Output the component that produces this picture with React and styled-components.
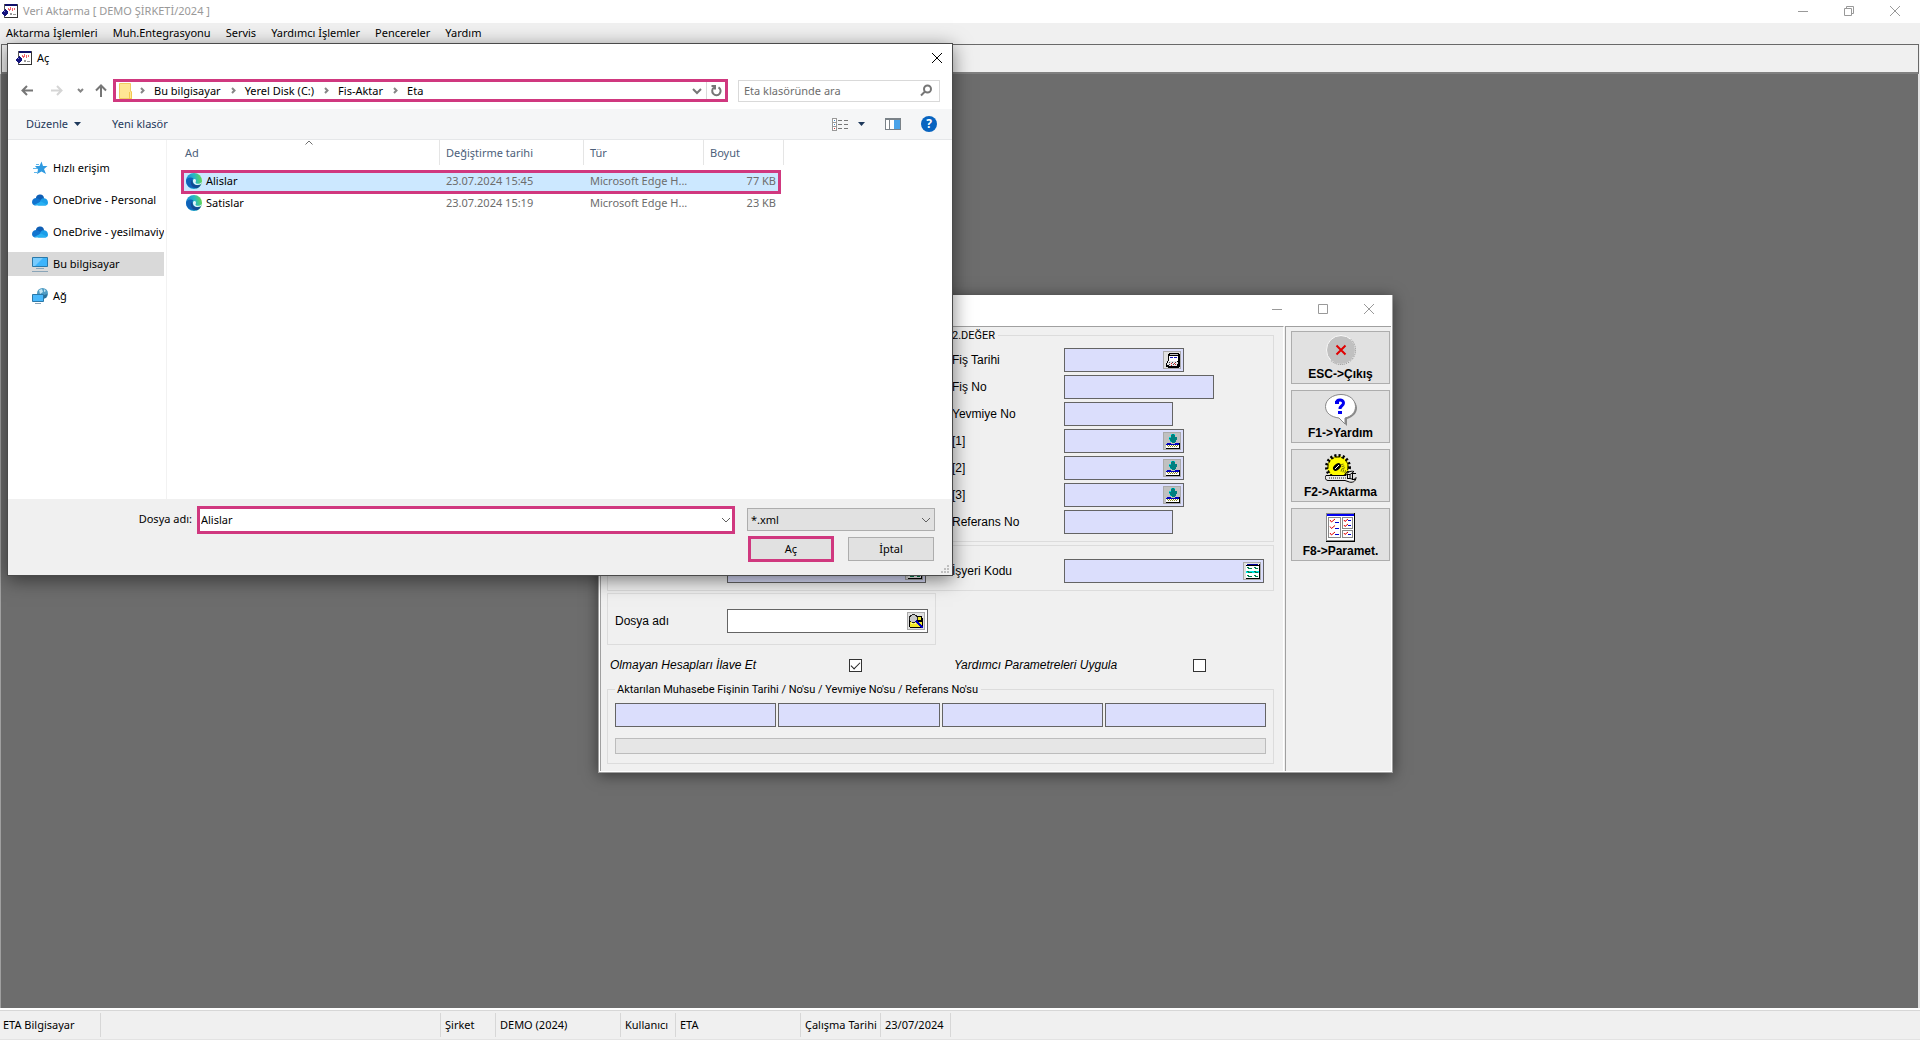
import { useState } from 'react';
import styled, { createGlobalStyle } from 'styled-components';

const menus = ['Aktarma İşlemleri', 'Muh.Entegrasyonu', 'Servis', 'Yardımcı İşlemler', 'Pencereler', 'Yardım'];

const folders = ['Bu bilgisayar', 'Yerel Disk (C:)', 'Fis-Aktar', 'Eta'];

const places = [
    { name: 'Hızlı erişim', icon: StarIcon },
    { name: 'OneDrive - Personal', icon: CloudIcon },
    { name: 'OneDrive - yesilmaviy', icon: CloudIcon },
    { name: 'Bu bilgisayar', icon: ComputerIcon, selected: true },
    { name: 'Ağ', icon: NetworkIcon },
];

const files = [
    { name: 'Alislar', date: '23.07.2024 15:45', type: 'Microsoft Edge H...', size: '77 KB' },
    { name: 'Satislar', date: '23.07.2024 15:19', type: 'Microsoft Edge H...', size: '23 KB' },
];

const fields = [
    { id: 'tarih', label: 'Fiş Tarihi', width: 120, icon: CalendarIcon },
    { id: 'fisno', label: 'Fiş No', width: 150 },
    { id: 'yevmiye', label: 'Yevmiye No', width: 109 },
    { id: 'kod1', label: '[1]', width: 120, icon: PickIcon },
    { id: 'kod2', label: '[2]', width: 120, icon: PickIcon },
    { id: 'kod3', label: '[3]', width: 120, icon: PickIcon },
    { id: 'referans', label: 'Referans No', width: 109 },
];

const actions = [
    { label: 'ESC->Çıkış', icon: ExitIcon },
    { label: 'F1->Yardım', icon: HelpIcon },
    { label: 'F2->Aktarma', icon: TransferIcon },
    { label: 'F8->Paramet.', icon: ParamsIcon },
];

const status = [
    { text: 'ETA Bilgisayar', width: 98 },
    { text: '', width: 340 },
    { text: 'Şirket', width: 55 },
    { text: 'DEMO (2024)', width: 125 },
    { text: 'Kullanıcı', width: 55 },
    { text: 'ETA', width: 125 },
    { text: 'Çalışma Tarihi', width: 80 },
    { text: '23/07/2024', width: 70 },
];

function App() {
    return (
        <Page>
            <GlobalStyle />
            <TitleBar>
                <AppIcon />
                <h1>Veri Aktarma [ DEMO ŞİRKETİ/2024 ]</h1>
                <WindowButtons />
            </TitleBar>
            <MenuBar>
                {menus.map((menu) => <MenuItem key={menu}>{menu}</MenuItem>)}
            </MenuBar>
            <ToolStrip />
            <Workspace />
            <StatusBar>
                {status.map((cell, i) => <StatusCell key={i} $width={cell.width}>{cell.text}</StatusCell>)}
            </StatusBar>
            <TransferWindow />
            <OpenDialog />
        </Page>
    );
}

function WindowButtons({ restored }) {
    return (
        <Controls>
            <button aria-label="Simge durumuna küçült"><Glyph><path d="M0 5.5h10" /></Glyph></button>
            <button aria-label="Ekranı kapla">
                {restored
                    ? <Glyph><path d="M.5 .5h9v9h-9z" /></Glyph>
                    : <Glyph><path d="M.5 2.5h7v7h-7zM2.5 2.5v-2h7v7h-2" /></Glyph>}
            </button>
            <button aria-label="Kapat"><Glyph><path d="M0 0l10 10M10 0L0 10" /></Glyph></button>
        </Controls>
    );
}

function TransferWindow() {
    const [create, setCreate] = useState(true);
    const [params, setParams] = useState(false);

    return (
        <Transfer>
            <TransferTitle>
                <WindowButtons restored />
            </TransferTitle>
            <TransferBody>
                <Form>
                    <ValueGroup>
                        <GroupTitle $left={342}>2.DEĞER</GroupTitle>
                        {fields.map((field) => (
                            <FieldRow key={field.id}>
                                <label htmlFor={field.id}>{field.label}</label>
                                <Box $width={field.width}>
                                    <input id={field.id} />
                                    {field.icon && <PickButton aria-label={field.label}><field.icon /></PickButton>}
                                </Box>
                            </FieldRow>
                        ))}
                    </ValueGroup>

                    <CodeGroup>
                        <Box $width={199}>
                            <input aria-label="Kod" />
                            <PickButton aria-label="Kod listesi"><ListIcon /></PickButton>
                        </Box>
                        <FieldRow>
                            <label htmlFor="isyeri">İşyeri Kodu</label>
                            <Box $width={200}>
                                <input id="isyeri" />
                                <PickButton aria-label="İşyeri listesi"><ListIcon /></PickButton>
                            </Box>
                        </FieldRow>
                    </CodeGroup>

                    <FileGroup>
                        <label htmlFor="dosya">Dosya adı</label>
                        <Box $width={201} $white>
                            <input id="dosya" />
                            <PickButton aria-label="Dosya seç"><FolderSearchIcon /></PickButton>
                        </Box>
                    </FileGroup>

                    <Checks>
                        <label htmlFor="ilave">Olmayan Hesapları İlave Et</label>
                        <Check id="ilave" type="checkbox" checked={create} onChange={() => setCreate(!create)} />
                        <label htmlFor="uygula">Yardımcı Parametreleri Uygula</label>
                        <Check id="uygula" type="checkbox" checked={params} onChange={() => setParams(!params)} />
                    </Checks>

                    <ResultGroup>
                        <GroupTitle $left={7}>Aktarılan Muhasebe Fişinin Tarihi / No'su / Yevmiye No'su / Referans No'su</GroupTitle>
                        <Results>
                            {['Tarih', 'No', 'Yevmiye No', 'Referans No'].map((name) => (
                                <Box key={name}><input aria-label={name} readOnly /></Box>
                            ))}
                        </Results>
                        <Progress role="progressbar" aria-label="Aktarma" aria-valuenow={0} />
                    </ResultGroup>
                </Form>
                <Actions>
                    {actions.map((action) => (
                        <ActionButton key={action.label}>
                            <action.icon />
                            {action.label}
                        </ActionButton>
                    ))}
                </Actions>
            </TransferBody>
        </Transfer>
    );
}

function OpenDialog() {
    const [fileName, setFileName] = useState('Alislar');

    return (
        <Dialog>
            <DialogTitle>
                <AppIcon />
                <h2>Aç</h2>
                <button aria-label="Kapat"><Glyph><path d="M0 0l10 10M10 0L0 10" /></Glyph></button>
            </DialogTitle>

            <NavRow>
                <NavButtons>
                    <button aria-label="Geri"><Arrow><path d="M12 6.5H1.5M6 2L1.5 6.5 6 11" /></Arrow></button>
                    <button aria-label="İleri"><Arrow $pale><path d="M0 6.5h10.5M6 2l4.5 4.5L6 11" /></Arrow></button>
                    <button aria-label="Son konumlar"><SmallArrow viewBox="0 0 7 7"><path d="M1 2l2.5 2.5L6 2" /></SmallArrow></button>
                    <button aria-label="Yukarı"><Arrow><path d="M6 13V1.5M1 6.5l5-5 5 5" /></Arrow></button>
                </NavButtons>
                <Address>
                    <FolderIcon />
                    {folders.map((folder) => (
                        <Crumb key={folder}>
                            <SmallArrow viewBox="0 0 7 7"><path d="M2 1l2.5 2.5L2 6" /></SmallArrow>
                            <button>{folder}</button>
                        </Crumb>
                    ))}
                    <AddressEnd>
                        <button aria-label="Önceki konumlar"><Chevron $bold viewBox="0 0 10 10"><path d="M1 3l4 4 4-4" /></Chevron></button>
                        <button aria-label="Yenile">
                            <Arrow><path d="M4 3.5A4.2 4.2 0 1 0 8.5 3.3M1.5 2H5v3.5" /></Arrow>
                        </button>
                    </AddressEnd>
                </Address>
                <Search>
                    <input aria-label="Eta klasöründe ara" placeholder="Eta klasöründe ara" />
                    <Arrow><circle cx="7.5" cy="5" r="3.5" /><path d="M5 7.5l-4 4" /></Arrow>
                </Search>
            </NavRow>

            <CommandBar>
                <button>Düzenle <Triangle viewBox="0 0 7 4"><path d="M0 0h7L3.5 4z" /></Triangle></button>
                <button>Yeni klasör</button>
                <ViewTools>
                    <button aria-label="Görünüm"><ViewIcon /><Triangle viewBox="0 0 7 4"><path d="M0 0h7L3.5 4z" /></Triangle></button>
                    <button aria-label="Önizleme bölmesi"><PaneIcon /></button>
                    <HelpButton aria-label="Yardım al">?</HelpButton>
                </ViewTools>
            </CommandBar>

            <Browser>
                <Places>
                    {places.map((place) => (
                        <Place key={place.name} $selected={place.selected}>
                            <place.icon />
                            <span>{place.name}</span>
                        </Place>
                    ))}
                </Places>
                <FileArea>
                    <FileTable>
                        <thead>
                            <tr>
                                <th>
                                    Ad
                                    <SortMark viewBox="0 0 8 5"><path d="M.5 4.5L4 1l3.5 3.5" /></SortMark>
                                </th>
                                <th>Değiştirme tarihi</th>
                                <th>Tür</th>
                                <th>Boyut</th>
                            </tr>
                        </thead>
                        <tbody>
                            {files.map((file) => (
                                <FileRow key={file.name} $selected={file.name === fileName} onClick={() => setFileName(file.name)}>
                                    <td><EdgeIcon />{file.name}</td>
                                    <td>{file.date}</td>
                                    <td>{file.type}</td>
                                    <td>{file.size}</td>
                                </FileRow>
                            ))}
                        </tbody>
                    </FileTable>
                </FileArea>
            </Browser>

            <DialogFooter>
                <label htmlFor="filename">Dosya adı:</label>
                <FileName>
                    <input id="filename" value={fileName} onChange={(event) => setFileName(event.target.value)} />
                    <button aria-label="Son dosyalar"><Chevron viewBox="0 0 10 10"><path d="M1 3l4 4 4-4" /></Chevron></button>
                </FileName>
                <Choices>
                    <TypeSelect>
                        <select aria-label="Dosya türü">
                            <option>*.xml</option>
                        </select>
                        <Chevron viewBox="0 0 10 10"><path d="M1 3l4 4 4-4" /></Chevron>
                    </TypeSelect>
                    <Buttons>
                        <DialogButton $marked>Aç</DialogButton>
                        <DialogButton>İptal</DialogButton>
                    </Buttons>
                </Choices>
                <Grip viewBox="0 0 9 9">
                    <path d="M6 0h2v2h-2zM3 3h2v2h-2zM6 3h2v2h-2zM0 6h2v2h-2zM3 6h2v2h-2zM6 6h2v2h-2z" />
                </Grip>
            </DialogFooter>
        </Dialog>
    );
}

/* icons */

function AppIcon() {
    return (
        <svg width="16" height="14" viewBox="0 0 16 14" shapeRendering="crispEdges">
            <path fill="#fff" stroke="#555" d="M2.5 .5h13v13h-13z" />
            <path fill="#10106a" d="M3 0h12v2H3z" />
            <path fill="#333" d="M15 1h1v13H3v-1h12z" />
            <path fill="#f0606a" d="M6 4h1v1h1v2H7V6H6zM8 3h1v3H8zM10 4h1v3h-1zM12 4h1v2h-1z" />
            <path fill="#999" d="M8 9h2v2H8zM11 10h3v1h-3z" />
            <path fill="#14147c" d="M3 5h1v1h1v1h1v3H5v1H4v1H2v-1H1v-1H0V8h1V7h1V6h1z" />
            <path fill="#7a7ae0" d="M2 7h1v1H2z" />
        </svg>
    );
}

function FolderIcon() {
    return (
        <svg width="13" height="16" viewBox="0 0 13 16">
            <path fill="#ffe694" stroke="#f0cc62" d="M.5 .5h11v8h1v7H.5z" />
            <path fill="#f3c94e" d="M10 9h3v7h-3z" />
            <path fill="#ffe694" d="M11 9h1v6h-1z" />
        </svg>
    );
}

function StarIcon() {
    return (
        <svg width="16" height="16" viewBox="0 0 16 16">
            <path fill="#2f9ae0" d="M9.5 1.5l1.5 4.5h4.5l-3.5 3 2 5-4.500-2.500L5 14l1-4.500L3 6h4.500z" />
            <path stroke="#5fb6ec" d="M4 4.5h3M1 8.5h4M2 12.5h3" />
        </svg>
    );
}

function CloudIcon() {
    return (
        <svg width="16" height="16" viewBox="0 0 16 16">
            <path fill="#0f5fb5" d="M4 7a4 4 0 0 1 8-1l1 3-9 3z" />
            <path fill="#1174cf" d="M0 10a4 4 0 0 1 6-3.5L12 10l-9 3.5A3.5 3.5 0 0 1 0 10z" />
            <path fill="#1b9de8" d="M9 7.5c2-2.5 7-1 7 3a3 3 0 0 1-3 3H6z" />
            <path fill="#28b0f2" d="M2 13l7-3.5 6 3c-1 1-1.5 1-2 1H4z" />
        </svg>
    );
}

function ComputerIcon() {
    return (
        <svg width="16" height="16" viewBox="0 0 16 16">
            <path fill="#3db4fb" stroke="#2b78a8" d="M.5 1.5h15v9H.5z" />
            <path fill="#78cbfd" d="M1 2h10L3 10H1z" />
            <path fill="#8aa5b8" d="M4 12h8v1H4zM0 15h16v1H0z" />
        </svg>
    );
}

function NetworkIcon() {
    return (
        <svg width="16" height="16" viewBox="0 0 16 16">
            <circle cx="10.5" cy="5.5" r="5.5" fill="#4f9cc4" />
            <path fill="#c3e4f2" d="M7 2l3-1 1 3-3 2zM12 1l2 2-2 1z" />
            <path fill="#2d6f98" d="M12 7l3.5-1-1.5 4h-2z" />
            <path fill="#4ab9fc" stroke="#2b78a8" d="M.5 6.5h11v7H.5z" />
            <path fill="#8aa5b8" d="M3 15h6v1H3z" />
        </svg>
    );
}

function EdgeIcon() {
    return (
        <svg width="16" height="16" viewBox="0 0 16 16">
            <defs>
                <linearGradient id="edge" x1="0" y1=".5" x2="1" y2=".3">
                    <stop offset="0" stopColor="#1588d8" />
                    <stop offset=".55" stopColor="#27b8c4" />
                    <stop offset="1" stopColor="#66d94c" />
                </linearGradient>
            </defs>
            <circle cx="8" cy="8" r="8" fill="url(#edge)" />
            <path fill="#0f62b8" d="M0 8c0-3 5-4.5 7.5-2.5C5 7 5.5 12 10 12.5c2 .2 4-.5 5-1.5A8 8 0 0 1 0 8z" />
            <path fill="#124a94" d="M5 8c-1 4 2 7 6 7.3 2-.8 3.3-2.3 4-4.3-4 2.5-9 1-8.5-4.5z" />
            <path fill="#dff2fb" d="M7 7c1-1.5 3-1 3 .7 0 1-.8 1.6-.3 2.3 1 1.3 4.5 1.2 6-1-.2 1-.6 2-1 2.300C11 13 6.500 11.500 7 7z" />
        </svg>
    );
}

function ViewIcon() {
    return (
        <svg width="17" height="13" viewBox="0 0 17 13" shapeRendering="crispEdges">
            <path fill="#fff" stroke="#999" d="M.5 .5h4v12h-4zM.5 4.5h4M.5 8.5h4" />
            <path stroke="#777" d="M6 2.5h4M12 2.5h4M6 6.5h4M12 6.5h4M6 10.5h4M12 10.5h4" />
            <path fill="#4a90d0" d="M2 2h1v1H2zM2 6h1v1H2z" />
            <path fill="#d03030" d="M2 10h1v1H2z" />
        </svg>
    );
}

function PaneIcon() {
    return (
        <svg width="16" height="12" viewBox="0 0 16 12" shapeRendering="crispEdges">
            <path fill="#fff" stroke="#7a8288" d="M.5 .5h15v11H.5z" />
            <path fill="#7a8288" d="M0 0h16v2H0zM4 2h1v9H4z" />
            <path fill="#4ba3e8" d="M9 2h6v9H9z" />
        </svg>
    );
}

function CalendarIcon() {
    return (
        <svg width="16" height="16" viewBox="0 0 16 16" shapeRendering="crispEdges">
            <path fill="#000" d="M5 1h10v1h1v13h-1v1H4v-1H2v-4h1V9h1V2h1z" />
            <path fill="#fff" d="M5 4h9v5H5z" />
            <path fill="#c0c0c0" d="M6 2h8v1H6z" />
            <path fill="#1010c0" d="M6 5h3v1H6zM10 5h3v1h-3z" />
            <path fill="#e8e8e8" d="M4 9h9v1h1v2h-1v2H5v-1H3v-2h1z" />
            <path fill="#444" d="M5 10h1v1H5zM8 10h1v1H8zM11 10h1v1h-1zM5 12h1v1H5zM9 12h1v1H9z" />
            <path fill="#d02020" d="M7 11h1v1H7zM10 11h1v1h-1zM7 13h1v1H7zM11 12h1v1h-1z" />
        </svg>
    );
}

function PickIcon() {
    return (
        <svg width="16" height="16" viewBox="0 0 16 16" shapeRendering="crispEdges">
            <path fill="#c0c0c0" d="M0 0h16v16H0z" />
            <path fill="#008080" d="M7 1h4v3h2v3h-1v2h-1v1H8V9H6V7H5V4h2z" />
            <path fill="#00e0e0" d="M7 1h1v1H7zM5 4h2v1H5zM10 1h1v1h-1zM5 6h1v1H5zM6 8h1v1H6z" />
            <path fill="#0000c0" d="M3 10h4v1H3zM11 10h4v1h-4zM2 11h13v1H2z" />
            <path fill="#fff" d="M2 12h13v3H2z" />
            <path fill="#8a8a20" d="M3 12h1v1H3zM5 12h1v1H5zM7 12h1v1H7zM9 12h1v1H9zM11 12h1v1h-1zM13 12h1v1h-1zM4 13h1v1H4zM6 13h1v1H6zM8 13h1v1H8zM10 13h1v1h-1zM12 13h1v1h-1z" />
            <path fill="#000" d="M15 10h1v6H2v-1h13z" />
        </svg>
    );
}

function ListIcon() {
    return (
        <svg width="16" height="16" viewBox="0 0 16 16" shapeRendering="crispEdges">
            <path fill="#fff" d="M2 1h13v14H2z" />
            <path fill="#0000a0" d="M3 1h11v1H3z" />
            <path fill="#000" d="M2 2h13v1H2zM15 1h1v15H2v-1h13z" />
            <path fill="#00e8e8" d="M2 8h13v2H2z" />
            <path fill="#008050" d="M3 4h2v1h3v1H4V5H3zM10 4h2v1h2v1h-3V5h-1zM3 8h2v1h3v1H4V9H3zM10 8h2v1h2v1h-3V9h-1zM3 12h2v1h3v1H4v-1H3zM10 12h2v1h2v1h-3v-1h-1z" />
        </svg>
    );
}

function FolderSearchIcon() {
    return (
        <svg width="16" height="16" viewBox="0 0 16 16" shapeRendering="crispEdges">
            <path fill="#000" d="M1 4h4V3h9v2h1v9h-1v1H2v-1H1z" />
            <path fill="#f0e828" d="M2 9h12v5H2zM9 4h4v3H9z" />
            <path fill="#fff8a0" d="M3 10h2v1H3zM6 10h2v1H6z" />
            <circle cx="5.5" cy="5.5" r="4" fill="#c8c8c8" stroke="#222" />
            <path fill="none" stroke="#0000c0" strokeWidth="2" d="M8 8l7 7" />
        </svg>
    );
}

function ExitIcon() {
    return (
        <svg width="32" height="30" viewBox="0 0 32 30">
            <circle cx="16" cy="15" r="14.5" fill="#c0c0c0" stroke="#f8f8f8" />
            <path fill="none" stroke="#777" strokeDasharray="1 1" d="M26 4.5A14.5 14.5 0 0 1 6 25.5" />
            <path stroke="#e00000" strokeWidth="2" d="M11.5 10.5l9 9M20.5 10.5l-9 9" />
        </svg>
    );
}

function HelpIcon() {
    return (
        <svg width="32" height="32" viewBox="0 0 32 32">
            <path fill="#888" d="M17 3c9 0 15 5 15 11 0 5-4 9-10 11v7l-6-6z" />
            <path fill="#fff" stroke="#888" d="M16 .5c8 0 14.500 5 14.500 12 0 6-4 10-10.500 11.500V30l-6-6C6 23 .5 19 .5 12.500.5 5.500 8 .5 16 .5z" />
            <path fill="none" stroke="#0000f0" strokeWidth="3" d="M11.500 9.500c0-4.500 7-4.500 7-.5 0 3-3.500 2.500-3.500 6" />
            <path fill="#0000f0" d="M10 7h4v3h-4zM13 17h4v3h-4z" />
        </svg>
    );
}

function TransferIcon() {
    return (
        <svg width="32" height="30" viewBox="0 0 32 30">
            <circle cx="13" cy="14" r="11" fill="#fffb00" stroke="#000" strokeWidth="4" strokeDasharray="2 2" />
            <circle cx="13" cy="14" r="10" fill="#fffb00" stroke="#000" strokeDasharray="3 2" />
            <ellipse cx="12" cy="14" rx="4.5" ry="3" fill="#000" transform="rotate(-40 12 14)" />
            <path stroke="#fff" d="M10 16l4-4" />
            <path stroke="#77770a" strokeDasharray="1 1" strokeWidth="3" d="M16 17l5 2M17 11l2 5" />
            <path fill="#e8e8e8" stroke="#000" d="M1 22.5h20c1-3 4-5 8-4l-4 3v4l4 1 2-2c0 4-4 6-8 4l-3-1H3c-3 0-3-4-2-5z" />
            <path stroke="#888" strokeDasharray="1 1" strokeWidth="2" d="M4 25h18" />
            <path fill="#000" d="M22 21h3v1h-2v3h2v1h-3zM27 20h4v1h-3v5h3v1h-4z" />
        </svg>
    );
}

function ParamsIcon() {
    return (
        <svg width="32" height="30" viewBox="0 0 32 30" shapeRendering="crispEdges">
            <path fill="#fff" stroke="#888" d="M1.5 1.5h28v27h-28z" />
            <path fill="#0000f0" d="M2 2h27v2H2z" />
            <path fill="#000" d="M29 1h1v29H1v-1h28z" />
            <path fill="none" stroke="#888" d="M3.5 5.5h12v20h-12zM17.5 5.5h10v11h-10zM17.5 18.5h10v7h-10z" />
            <path stroke="#0000d0" d="M10 10.500h4M10 16.500h4M10 22.500h4M23 8.500h3M23 13.500h3M23 22.500h3" />
            <path fill="none" stroke="#e00000" shapeRendering="auto" d="M5 8l1.500 2L10 7M5 14.500l1.500 2 3.500-3M5 21l1.500 2 3.500-3M19 8l1 1.500L23 7M19 13l1 1.500 3-2.500M19 21l1 1.500 3-2.500" />
        </svg>
    );
}

export default App;

const GlobalStyle = createGlobalStyle`
    * {
        box-sizing: border-box;
    }

    body {
        margin: 0;
        background-color: #f0f0f0;
    }

    button, input, select {
        margin: 0;
        padding: 0;
        border: none;
        background: none;
        color: inherit;
        font: inherit;
        outline: none;
    }

    h1, h2 {
        margin: 0;
        font: inherit;
    }

    svg {
        flex: none;
        display: block;
    }
`;

const Page = styled.main`
    position: relative;
    display: flex;
    flex-direction: column;
    min-height: 100vh;
    overflow: hidden;
    background-color: #f0f0f0;
    color: #000;
    font-family: 'Noto Sans', 'Open Sans', sans-serif;
    font-size: 11px;
    line-height: 16px;
    white-space: nowrap;
`;

const TitleBar = styled.header`
    display: flex;
    align-items: center;
    gap: 5px;
    height: 23px;
    padding: 0 2px 2px;
    background-color: #fff;
    color: #999;
`;

const Controls = styled.div`
    display: flex;
    margin-left: auto;
    color: #999;

    button {
        display: flex;
        align-items: center;
        justify-content: center;
        width: 46px;
        height: 20px;
    }
`;

const Glyph = styled.svg.attrs({ viewBox: '0 0 10 10' })`
    width: 10px;
    height: 10px;
    fill: none;
    stroke: currentColor;
`;

const MenuBar = styled.nav`
    display: flex;
    gap: 15px;
    height: 21px;
    padding: 2px 6px 3px;
`;

const MenuItem = styled.button``;

const ToolStrip = styled.div`
    height: 30px;
    margin: 0 1px;
    border: 1px solid #696969;
    border-bottom: 2px solid #808080;
`;

const Workspace = styled.div`
    flex: 1;
    border-left: 1px solid #a0a0a0;
    border-right: 2px solid #e3e3e3;
    background-color: #6d6d6d;
`;

const StatusBar = styled.footer`
    display: flex;
    height: 32px;
    padding: 3px 2px 2px;
    border-top: 2px solid #fff;
    border-bottom: 1px solid #e3e3e3;
    box-shadow: inset 0 1px #d7d7d7;
`;

const StatusCell = styled.div`
    width: ${(props) => props.$width}px;
    padding-left: 4px;
    border-right: 1px solid #d7d7d7;
    line-height: 24px;

    &:first-child {
        width: 99px;
        padding-left: 1px;
    }
`;

const Transfer = styled.section`
    position: absolute;
    top: 295px;
    left: 598px;
    width: 795px;
    border: 1px solid #a0a0a0;
    border-top: none;
    background-color: #f0f0f0;
    box-shadow: 0 2px 14px rgba(0, 0, 0, .5);
    font-family: 'Liberation Sans', Arial, sans-serif;
    font-size: 12px;
`;

const TransferTitle = styled.div`
    display: flex;
    height: 31px;
    padding-top: 4px;
    background-color: #fff;
`;

const TransferBody = styled.div`
    display: flex;
    border: 1px solid #fff;
    border-top: none;
`;

const Form = styled.div`
    flex: 1;
    min-width: 0;
    padding: 8px 9px 7px 6px;
    border-top: 1px solid #a0a0a0;
    border-left: 1px solid #a0a0a0;
    border-right: 1px solid #fff;
`;

const Group = styled.div`
    position: relative;
    border: 1px solid #dcdcdc;
`;

const GroupTitle = styled.span`
    position: absolute;
    top: -8px;
    left: ${(props) => props.$left}px;
    padding: 0 3px 0 2px;
    background-color: #f0f0f0;
    font-family: Roboto, sans-serif;
    font-size: 11px;
`;

const ValueGroup = styled(Group)`
    display: flex;
    flex-direction: column;
    gap: 3px;
    padding: 12px 0 7px 344px;
`;

const FieldRow = styled.div`
    display: flex;
    align-items: center;

    label {
        width: 112px;
    }
`;

const Box = styled.div`
    display: flex;
    align-items: center;
    width: ${(props) => (props.$width ? props.$width + 'px' : 'auto')};
    height: 24px;
    padding: 2px;
    border: 1px solid #646464;
    background-color: ${(props) => (props.$white ? '#fff' : '#dbdefc')};

    input {
        flex: 1;
        min-width: 0;
    }
`;

const PickButton = styled.button`
    width: 18px;
    height: 18px;
    border: 1px solid #a9a9a9;
    background-color: #e1e1e1;
`;

const CodeGroup = styled(Group)`
    display: flex;
    gap: 26px;
    margin-top: 3px;
    padding: 13px 0 7px 119px;
`;

const FileGroup = styled(Group)`
    display: flex;
    align-items: center;
    width: 329px;
    margin-top: 2px;
    padding: 15px 7px 11px;

    label {
        width: 112px;
    }
`;

const Checks = styled.div`
    display: grid;
    grid-template-columns: 239px 105px 239px auto;
    align-items: center;
    justify-content: start;
    padding: 12px 3px 16px;
    font-style: italic;
`;

const Check = styled.input`
    appearance: none;
    width: 13px;
    height: 13px;
    border: 1px solid #333;
    background-color: #fff;

    &:checked::after {
        content: '';
        display: block;
        width: 8px;
        height: 4px;
        margin: 2px 1px;
        border-left: 1px solid #222;
        border-bottom: 1px solid #222;
        transform: rotate(-45deg);
    }
`;

const ResultGroup = styled(Group)`
    padding: 13px 7px 9px;
`;

const Results = styled.div`
    display: grid;
    grid-template-columns: repeat(4, minmax(0, 1fr));
    gap: 2px;
`;

const Progress = styled.div`
    height: 16px;
    margin-top: 11px;
    border: 1px solid #bcbcbc;
    background-color: #e6e6e6;
`;

const Actions = styled.div`
    display: flex;
    flex-direction: column;
    gap: 6px;
    width: 106px;
    margin-left: 1px;
    padding: 4px 1px 4px 5px;
    border-top: 1px solid #a0a0a0;
    border-left: 1px solid #a0a0a0;
`;

const ActionButton = styled.button`
    display: flex;
    flex-direction: column;
    align-items: center;
    justify-content: space-between;
    height: 53px;
    padding: 3px 0 2px;
    border: 1px solid #adadad;
    background-color: #e1e1e1;
    font-weight: bold;
    line-height: 14px;
`;

const Dialog = styled.section`
    position: absolute;
    top: 43px;
    left: 7px;
    width: 946px;
    border: 1px solid #4a4a4a;
    background-color: #fff;
    box-shadow: 0 4px 18px rgba(0, 0, 0, .5);
`;

const DialogTitle = styled.header`
    display: flex;
    align-items: center;
    gap: 5px;
    height: 30px;
    padding: 0 10px 2px 8px;

    button {
        margin-left: auto;
    }
`;

const NavRow = styled.div`
    display: flex;
    align-items: center;
    height: 35px;
    padding: 0 12px 2px 13px;
`;

const NavButtons = styled.div`
    display: grid;
    grid-template-columns: 30px 26px 18px 18px;
    align-items: center;
`;

const Arrow = styled.svg.attrs({ viewBox: '0 0 13 13' })`
    width: 13px;
    height: 13px;
    fill: none;
    stroke: ${(props) => (props.$pale ? '#d5d5d5' : '#767676')};
    stroke-width: 2;
`;

const SmallArrow = styled.svg`
    width: 7px;
    height: 7px;
    fill: none;
    stroke: #858585;
    stroke-width: 2;
`;

const Chevron = styled.svg`
    width: 10px;
    height: 10px;
    fill: none;
    stroke: ${(props) => (props.$bold ? '#767676' : '#606060')};
    stroke-width: ${(props) => (props.$bold ? 2 : 1)};
`;

const Address = styled.div`
    display: flex;
    align-items: center;
    width: 615px;
    height: 23px;
    padding-left: 3px;
    border: 3px solid #d0387f;
`;

const Crumb = styled.div`
    display: flex;
    align-items: center;
    gap: 8px;
    margin-left: 7px;

    & + & {
        margin-left: 9px;
    }
`;

const AddressEnd = styled.div`
    display: flex;
    align-self: stretch;
    align-items: center;
    margin-left: auto;

    button {
        display: flex;
        align-items: center;
        justify-content: center;
        width: 19px;
        height: 100%;
    }

    button + button {
        border-left: 1px solid #d9d9d9;
    }
`;

const Search = styled.div`
    display: flex;
    flex: 1;
    align-items: center;
    height: 22px;
    margin-left: 10px;
    padding: 0 6px 0 5px;
    border: 1px solid #d9d9d9;

    input {
        flex: 1;
        min-width: 0;
    }

    input::placeholder {
        color: #6d6d6d;
        opacity: 1;
    }
`;

const CommandBar = styled.div`
    display: flex;
    align-items: center;
    gap: 31px;
    height: 31px;
    padding: 0 15px 0 18px;
    border-bottom: 1px solid #e5e7e9;
    background-color: #f5f6f7;
    color: #1e395b;

    button {
        display: flex;
        align-items: center;
        gap: 6px;
    }
`;

const Triangle = styled.svg`
    width: 7px;
    height: 4px;
    fill: #1e395b;
`;

const ViewTools = styled.div`
    display: flex;
    align-items: center;
    gap: 20px;
    margin-left: auto;

    button:first-child {
        gap: 9px;
    }
`;

const HelpButton = styled.button`
    justify-content: center;
    width: 16px;
    height: 16px;
    border-radius: 8px;
    background-color: #0864c0;
    color: #fff;
    font-weight: bold;
    font-size: 12px;
`;

const Browser = styled.div`
    display: flex;
    height: 359px;
`;

const Places = styled.aside`
    display: flex;
    flex-direction: column;
    gap: 8px;
    width: 159px;
    padding: 16px 2px 0 0;
    border-right: 1px solid #f2f2f2;
`;

const Place = styled.button`
    display: flex;
    align-items: center;
    gap: 5px;
    height: 24px;
    padding-left: 24px;
    overflow: hidden;
    background-color: ${(props) => (props.$selected ? '#d9d9d9' : 'transparent')};
`;

const FileArea = styled.div`
    flex: 1;
    padding-left: 15px;
`;

const FileTable = styled.table`
    display: block;
    width: 602px;

    thead, tbody {
        display: block;
    }

    thead {
        margin-bottom: 6px;
    }

    tr {
        display: grid;
        grid-template-columns: 258px 144px 120px 80px;
    }

    th {
        position: relative;
        height: 25px;
        padding: 0 0 0 6px;
        border-right: 1px solid #e5e5e5;
        color: #4c607a;
        font-weight: normal;
        line-height: 25px;
        text-align: left;
    }

    th:first-child {
        padding-left: 3px;
    }
`;

const SortMark = styled.svg`
    position: absolute;
    top: 0;
    left: 123px;
    width: 8px;
    height: 5px;
    fill: none;
    stroke: #6d6d6d;
`;

const FileRow = styled.tr`
    margin-right: 4px;
    background-color: ${(props) => (props.$selected ? '#cce8ff' : 'transparent')};
    outline: ${(props) => (props.$selected ? '3px solid #d0387f' : 'none')};
    outline-offset: -2px;

    td {
        display: flex;
        align-items: center;
        gap: 4px;
        height: 22px;
        padding: 0 0 2px 6px;
        color: #6d6d6d;
    }

    td:first-child {
        padding-left: 4px;
        color: #000;
    }

    td:last-child {
        justify-content: flex-end;
        padding-right: 8px;
    }
`;

const DialogFooter = styled.footer`
    position: relative;
    display: flex;
    align-items: flex-start;
    height: 76px;
    padding: 7px 17px 0 0;
    background-color: #f0f0f0;

    label {
        width: 189px;
        padding-right: 5px;
        line-height: 26px;
        text-align: right;
    }
`;

const FileName = styled.div`
    display: flex;
    flex: 1;
    align-items: center;
    height: 28px;
    padding: 0 1px;
    border: 3px solid #d0387f;
    background-color: #fff;

    input {
        flex: 1;
        min-width: 0;
    }
`;

const Choices = styled.div`
    width: 188px;
    margin: 2px 0 0 12px;
`;

const TypeSelect = styled.div`
    display: grid;
    align-items: center;
    height: 23px;
    border: 1px solid #adadad;
    background-color: #e1e1e1;

    select, svg {
        grid-area: 1 / 1;
    }

    select {
        appearance: none;
        height: 21px;
        padding-left: 3px;
    }

    svg {
        justify-self: end;
        margin-right: 3px;
        pointer-events: none;
    }
`;

const Buttons = styled.div`
    display: flex;
    align-items: center;
    justify-content: space-between;
    margin: 5px 1px 0;
`;

const DialogButton = styled.button`
    width: 86px;
    height: ${(props) => (props.$marked ? 26 : 24)}px;
    border: ${(props) => (props.$marked ? '3px solid #d0387f' : '1px solid #adadad')};
    background-color: #e1e1e1;
`;

const Grip = styled.svg`
    position: absolute;
    right: 2px;
    bottom: 1px;
    width: 9px;
    height: 9px;
    fill: #bfbfbf;
`;
